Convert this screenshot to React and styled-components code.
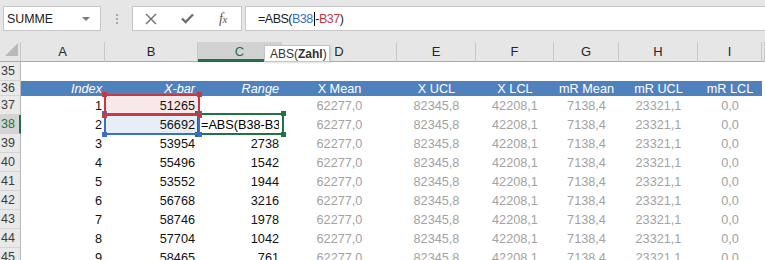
import React from "react";
import styled, { createGlobalStyle, css } from "styled-components";

const GREEN = "#217346";
const RED = "#c23a44";
const BLUE = "#3a6fc7";
const GRID = "21px 84px 93px 84px 115px 79px 78px 65px 79px 64px 1fr";

const GlobalStyle = createGlobalStyle`
  html, body { margin: 0; padding: 0; background: #fff; }
  body { font-family: "Liberation Sans", Arial, sans-serif; overflow: hidden; }
`;

const Window = styled.div`
  width: 765px;
  height: 260px;
  overflow: hidden;
  background: #fff;
`;

const TopBar = styled.div`
  height: 42px;
  box-sizing: border-box;
  background: #e6e6e6;
  display: flex;
  align-items: flex-start;
  padding: 6px 0 0 3px;
`;

const NameBox = styled.div`
  width: 98px;
  height: 25px;
  box-sizing: border-box;
  background: #fff;
  border: 1px solid #c6c6c6;
  display: flex;
  align-items: center;
  justify-content: space-between;
  padding: 0 10px 0 3px;
  font-size: 12.4px;
  color: #222;
`;

const Caret = styled.span`
  width: 0;
  height: 0;
  border-left: 4px solid transparent;
  border-right: 4px solid transparent;
  border-top: 4px solid #7a7a7a;
`;

const Grip = styled.div`
  margin: 8px 0 0 15px;
  display: flex;
  flex-direction: column;
  gap: 2px;
`;

const GripDot = styled.span`
  width: 2px;
  height: 2px;
  background: #a8a8a8;
`;

const ButtonBox = styled.div`
  margin-left: 14px;
  width: 110px;
  height: 25px;
  box-sizing: border-box;
  background: #fff;
  border: 1px solid #c6c6c6;
  display: grid;
  grid-template-columns: 36px 36px 36px;
  align-items: center;
  justify-items: center;
`;

const Fx = styled.span`
  font-family: "Liberation Serif", "Times New Roman", serif;
  font-style: italic;
  font-size: 14px;
  color: #5a5a5a;
  letter-spacing: -0.5px;

  small {
    font-size: 11px;
  }
`;

const FormulaBox = styled.div`
  margin-left: 3px;
  flex: 1;
  height: 25px;
  box-sizing: border-box;
  background: #fff;
  border: 1px solid #c6c6c6;
  border-right: none;
  display: flex;
  align-items: center;
  padding-left: 12px;
  font-size: 12.5px;
  letter-spacing: -0.5px;
  color: #222;
  white-space: pre;
`;

const Ref = styled.span`
  color: ${(p) => p.$color};
`;

const TextCursor = styled.span`
  display: inline-block;
  width: 1px;
  height: 14px;
  background: #000;
  vertical-align: middle;
  margin: 0 0.5px 0 1px;
`;

const HeaderRow = styled.div`
  position: relative;
  display: grid;
  grid-template-columns: ${GRID};
  height: 20px;
  background: #e6e6e6;
`;

const Corner = styled.div`
  box-sizing: border-box;
  border-right: 1px solid #c6c6c6;
  border-bottom: 1px solid #ababab;
  display: flex;
  align-items: flex-end;
  justify-content: flex-end;
  padding: 0 2px 5px 0;
`;

const ColHead = styled.div`
  box-sizing: border-box;
  border-right: 1px solid #c8c8c8;
  border-bottom: 1px solid #ababab;
  display: flex;
  align-items: center;
  justify-content: center;
  font-size: 13px;
  color: #262626;
  ${(p) =>
    p.$active &&
    css`
      background: #d2d2d2;
      color: ${GREEN};
      border-bottom: 3px solid ${GREEN};
      padding-top: 2px;
    `}
`;

const Tooltip = styled.div`
  position: absolute;
  left: 264px;
  top: 3px;
  height: 17px;
  box-sizing: border-box;
  padding: 0 2px 0 5px;
  background: #fff;
  border: 1px solid #c4c4c4;
  box-shadow: 1px 1px 2px rgba(0, 0, 0, 0.12);
  font-size: 12px;
  color: #333;
  display: flex;
  align-items: center;

  b {
    font-weight: bold;
  }
`;

const Row = styled.div`
  display: grid;
  grid-template-columns: ${GRID};
  height: ${(p) => p.$h || 19}px;
`;

const RowHead = styled.div`
  box-sizing: border-box;
  background: #e9e9e9;
  border-right: 1px solid #b8b8b8;
  border-bottom: 1px solid #d4d4d4;
  display: flex;
  align-items: center;
  padding-left: 1px;
  font-size: 12.5px;
  color: #3c3c3c;
  ${(p) =>
    p.$active &&
    css`
      background: #d4d4d4;
      color: ${GREEN};
      border-right: 2px solid ${GREEN};
    `}
`;

const Cell = styled.div`
  position: relative;
  display: flex;
  align-items: center;
  justify-content: ${(p) =>
    p.$align === "right" ? "flex-end" : p.$align === "center" ? "center" : "flex-start"};
  padding: 0 3px;
  font-size: 12.7px;
  white-space: nowrap;
  color: ${(p) => (p.$muted ? "#a2a2a2" : "#111")};
  background: ${(p) => p.$fill || "transparent"};
  ${(p) =>
    p.$band &&
    css`
      background: #4f81bd;
      color: #fff;
    `}
  ${(p) => p.$italic && "font-style: italic;"}
`;

const EditText = styled.span`
  display: block;
  width: 100%;
  overflow: hidden;
  color: #000;
`;

const Frame = styled.div`
  position: absolute;
  top: -2px;
  right: -2px;
  bottom: -1px;
  left: -1px;
  border: 2px solid ${(p) => p.$color};
  z-index: ${(p) => p.$z};
  pointer-events: none;
`;

const Handle = styled.span`
  position: absolute;
  width: 5px;
  height: 5px;
  background: ${(p) => p.$color};
  ${(p) => (p.$v === "top" ? "top: -4px;" : "bottom: -4px;")}
  ${(p) => (p.$h === "left" ? "left: -4px;" : "right: -4px;")}
`;

function RefFrame({ color, z }) {
  return (
    <Frame $color={color} $z={z}>
      {["top", "bottom"].map((v) =>
        ["left", "right"].map((h) => (
          <Handle key={v + h} $v={v} $h={h} $color={color} />
        ))
      )}
    </Frame>
  );
}

const columns = ["A", "B", "C", "D", "E", "F", "G", "H", "I", ""];
const stats = ["62277,0", "82345,8", "42208,1", "7138,4", "23321,1", "0,0"];
const data = [
  [37, 1, "51265", ""],
  [38, 2, "56692", null],
  [39, 3, "53954", "2738"],
  [40, 4, "55496", "1542"],
  [41, 5, "53552", "1944"],
  [42, 6, "56768", "3216"],
  [43, 7, "58746", "1978"],
  [44, 8, "57704", "1042"],
  [45, 9, "58465", "761"],
];

export default function App() {
  return (
    <Window>
      <GlobalStyle />
      <TopBar>
        <NameBox>
          SUMME
          <Caret />
        </NameBox>
        <Grip>
          <GripDot />
          <GripDot />
          <GripDot />
        </Grip>
        <ButtonBox>
          <svg width="12" height="12" viewBox="0 0 12 12">
            <path d="M1 1 L11 11 M11 1 L1 11" stroke="#6e6e6e" strokeWidth="1.4" />
          </svg>
          <svg width="13" height="11" viewBox="0 0 13 11">
            <path d="M1 5.5 L4.6 9 L12 1.5" stroke="#6e6e6e" strokeWidth="2.4" fill="none" />
          </svg>
          <Fx>
            f<small>x</small>
          </Fx>
        </ButtonBox>
        <FormulaBox>
          =ABS(<Ref $color={BLUE}>B38</Ref>
          <TextCursor />-<Ref $color={RED}>B37</Ref>)
        </FormulaBox>
      </TopBar>

      <HeaderRow>
        <Corner>
          <svg width="13" height="13" viewBox="0 0 13 13">
            <polygon points="13,0 13,13 0,13" fill="#b9b9b9" />
          </svg>
        </Corner>
        {columns.map((c, i) => (
          <ColHead key={i} $active={c === "C"}>
            {c}
          </ColHead>
        ))}
        <Tooltip>
          ABS(<b>Zahl</b>)
        </Tooltip>
      </HeaderRow>

      <Row>
        <RowHead>35</RowHead>
      </Row>

      <Row $h={15}>
        <RowHead>36</RowHead>
        <Cell $band $italic $align="right">Index</Cell>
        <Cell $band $italic $align="right">X-bar</Cell>
        <Cell $band $italic $align="right">Range</Cell>
        {["X Mean", "X UCL", "X LCL", "mR Mean", "mR UCL", "mR LCL"].map((t) => (
          <Cell key={t} $band $align="center">
            {t}
          </Cell>
        ))}
      </Row>

      {data.map(([row, idx, xbar, range]) => (
        <Row key={row}>
          <RowHead $active={row === 38}>{row}</RowHead>
          <Cell $align="right">{idx}</Cell>
          <Cell
            $align="right"
            $fill={row === 37 ? "#f9e8e9" : row === 38 ? "#e8eef8" : undefined}
          >
            {xbar}
            {row === 37 && <RefFrame color={RED} z={4} />}
            {row === 38 && <RefFrame color={BLUE} z={3} />}
          </Cell>
          <Cell $align="right">
            {range === null ? (
              <>
                <EditText>=ABS(B38-B37)</EditText>
                <RefFrame color={GREEN} z={2} />
              </>
            ) : (
              range
            )}
          </Cell>
          {stats.map((s, i) => (
            <Cell key={i} $muted $align="center">
              {s}
            </Cell>
          ))}
        </Row>
      ))}
    </Window>
  );
}
